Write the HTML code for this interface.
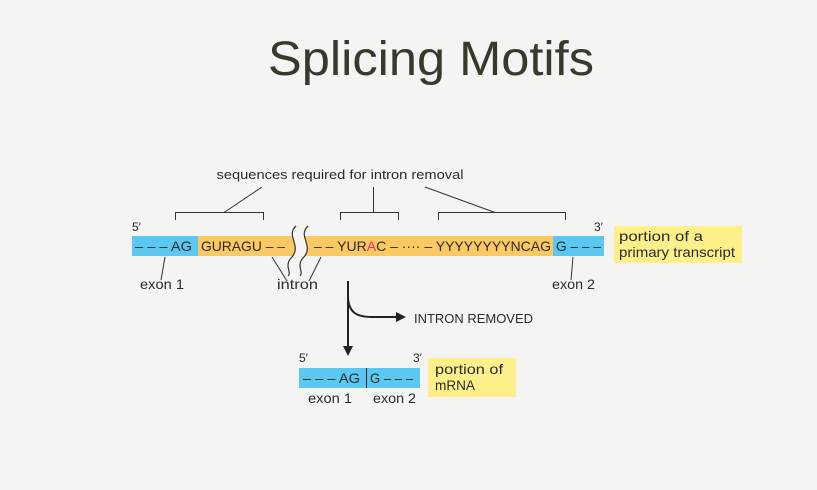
<!DOCTYPE html>
<html><head><meta charset="utf-8"><style>
html,body{margin:0;padding:0;background:#f4f4f2;}
svg{display:block}
text{font-family:"Liberation Sans",sans-serif;fill:#2b2b2b}
</style></head><body>
<svg width="817" height="490" viewBox="0 0 817 490" xmlns="http://www.w3.org/2000/svg">
<rect width="817" height="490" fill="#f4f4f2"/>
<text x="431" y="75" font-size="48" text-anchor="middle" textLength="326" lengthAdjust="spacingAndGlyphs" style="font-family:'Liberation Sans',sans-serif;fill:#38382c">Splicing Motifs</text>

<text x="340" y="179" font-size="13" text-anchor="middle" textLength="247" lengthAdjust="spacingAndGlyphs">sequences required for intron removal</text>
<g stroke="#333" stroke-width="1" fill="none">
<path d="M175.5 220V212.5H263.5V220"/>
<path d="M224 212.5L262 187"/>
<path d="M340.5 220V212.5H398.5V220"/>
<path d="M373.5 212.5V187"/>
<path d="M438.5 220V212.5H565.5V220"/>
<path d="M495 212.5L425 187"/>
</g>

<rect x="132" y="236" width="66" height="20" fill="#5ac8f0"/>
<rect x="198" y="236" width="355" height="20" fill="#fbc862"/>
<rect x="553" y="236" width="51" height="20" fill="#5ac8f0"/>
<path d="M296 226 C285 236,303 246,291 258 C284 266,292 272,288 276 L300 276 C304 272,296 266,303 258 C315 246,297 236,308 226Z" fill="#f4f4f2"/>
<g stroke="#333" stroke-width="1.2" fill="none">
<path d="M296 226 C285 236,303 246,291 258 C284 266,292 272,288 276"/>
<path d="M308 226 C297 236,315 246,303 258 C296 266,304 272,300 276"/>
</g>
<text x="135" y="251" font-size="14" textLength="57" lengthAdjust="spacingAndGlyphs">– – – AG</text>
<text x="201" y="251" font-size="14" textLength="84" lengthAdjust="spacingAndGlyphs">GURAGU – –</text>
<text x="314" y="251" font-size="14" textLength="237" lengthAdjust="spacingAndGlyphs">– –  YUR<tspan style="fill:#e8336f">A</tspan>C – ···· – YYYYYYYYNCAG</text>
<text x="556" y="251" font-size="14" textLength="45" lengthAdjust="spacingAndGlyphs">G – – –</text>
<text x="132" y="231" font-size="12">5′</text>
<text x="594" y="231" font-size="12">3′</text>
<rect x="614" y="226" width="128" height="37" fill="#fdf08a"/>
<text x="619" y="241" font-size="14" textLength="84" lengthAdjust="spacingAndGlyphs">portion of a</text>
<text x="619" y="257" font-size="14" textLength="116" lengthAdjust="spacingAndGlyphs">primary transcript</text>

<g stroke="#333" stroke-width="1" fill="none">
<path d="M165 257L161 280"/>
<path d="M272 257L287 281"/>
<path d="M321 257L309 281"/>
<path d="M573 257L571 280"/>
</g>
<text x="140" y="289" font-size="14" textLength="44" lengthAdjust="spacingAndGlyphs">exon 1</text>
<text x="277" y="289" font-size="14" textLength="41" lengthAdjust="spacingAndGlyphs">intron</text>
<text x="552" y="289" font-size="14" textLength="43" lengthAdjust="spacingAndGlyphs">exon 2</text>

<g stroke="#222" stroke-width="2" fill="none">
<path d="M348 281V348"/>
<path d="M348 298 C349 312,356 317,372 317 H398"/>
</g>
<path d="M343 346L348 356L353 346Z" fill="#222"/>
<path d="M396 312L406 317L396 322Z" fill="#222"/>
<text x="414" y="323" font-size="13" textLength="119" lengthAdjust="spacingAndGlyphs">INTRON REMOVED</text>

<rect x="299" y="368" width="121" height="20" fill="#5ac8f0"/>
<path d="M366.5 368V388" stroke="#222" stroke-width="1"/>
<text x="303" y="383" font-size="14" textLength="57" lengthAdjust="spacingAndGlyphs">– – – AG</text>
<text x="370" y="383" font-size="14" textLength="43" lengthAdjust="spacingAndGlyphs">G – – –</text>
<text x="299" y="362" font-size="12">5′</text>
<text x="413" y="362" font-size="12">3′</text>
<text x="308" y="403" font-size="14" textLength="44" lengthAdjust="spacingAndGlyphs">exon 1</text>
<text x="373" y="403" font-size="14" textLength="43" lengthAdjust="spacingAndGlyphs">exon 2</text>
<rect x="428" y="358" width="88" height="39" fill="#fdf08a"/>
<text x="435" y="374" font-size="14" textLength="68" lengthAdjust="spacingAndGlyphs">portion of</text>
<text x="435" y="390" font-size="14" textLength="40" lengthAdjust="spacingAndGlyphs">mRNA</text>
</svg>
</body></html>
